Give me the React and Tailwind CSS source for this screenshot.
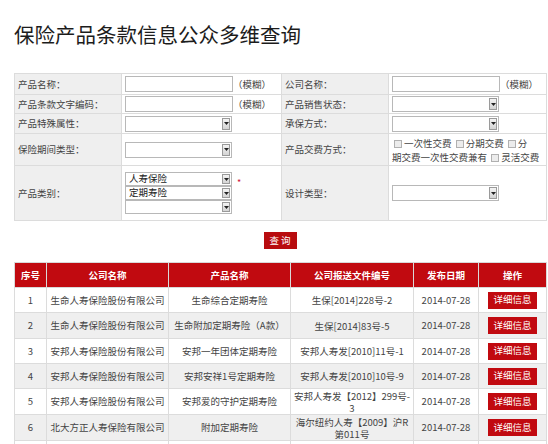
import React from "react";

const rows = [
  { no: 1, company: "生命人寿保险股份有限公司", product: "生命综合定期寿险", doc: ["生保[2014]228号-2"], h: "h-[25px]" },
  { no: 2, company: "生命人寿保险股份有限公司", product: "生命附加定期寿险（A款）", doc: ["生保[2014]83号-5"], h: "h-[26px]" },
  { no: 3, company: "安邦人寿保险股份有限公司", product: "安邦一年团体定期寿险", doc: ["安邦人寿发[2010]11号-1"], h: "h-[25px]" },
  { no: 4, company: "安邦人寿保险股份有限公司", product: "安邦安祥1号定期寿险", doc: ["安邦人寿发[2010]10号-9"], h: "h-[25px]" },
  { no: 5, company: "安邦人寿保险股份有限公司", product: "安邦爱的守护定期寿险", doc: ["安邦人寿发【2012】299号-", "3"], h: "h-[26px]" },
  { no: 6, company: "北大方正人寿保险有限公司", product: "附加定期寿险", doc: ["海尔纽约人寿【2009】沪R", "第011号"], h: "h-[26px]" },
];

function TextBox() {
  return <div className="w-[108px] h-[16px] border border-[#b8b8b8] bg-white shrink-0" />;
}

function SelectBox({ value = "", tall = "h-[16px]" }) {
  return (
    <div className={`relative w-[107px] ${tall} border border-[#b8b8b8] bg-white flex items-center shrink-0`}>
      <span className="pl-[3px] text-[9.5px] leading-none text-[#222]">{value}</span>
      <span className="absolute right-[1px] top-[1px] bottom-[1px] w-[8px] border border-[#9a9a9a] bg-gradient-to-b from-[#f4f4f4] to-[#d4d4d4] flex items-center justify-center">
        <svg width="5" height="3" viewBox="0 0 5 3">
          <path d="M0 0 L5 0 L2.5 3 Z" fill="#222" />
        </svg>
      </span>
    </div>
  );
}

function Check() {
  return <span className="inline-block w-[8px] h-[8px] border border-[#b0b0b0] bg-[#ececec] ml-[2px] mr-[2px] align-[-1px]" />;
}

const label = "bg-[#efefef] border border-[#dcdcdc] pl-[3px] text-left text-[9.5px] text-[#444] align-middle";
const field = "bg-white border border-[#dcdcdc] pl-[3px] align-middle";
const fuzzy = <span className="text-[9.5px] text-[#444]">（模糊）</span>;

export default function App() {
  return (
    <div className="w-[548px] h-[444px] overflow-hidden bg-white font-['Noto_Sans_CJK_SC','Noto_Sans',sans-serif]">
      <div className="pl-[14px] pt-[19px] leading-[30px] text-[20.5px] text-[#1c1c1c] mb-[24px]">
        保险产品条款信息公众多维查询
      </div>

      <table className="ml-[14px] w-[532px] table-fixed border-collapse">
        <colgroup>
          <col className="w-[107px]" />
          <col className="w-[160px]" />
          <col className="w-[107px]" />
          <col className="w-[158px]" />
        </colgroup>
        <tbody>
          <tr className="h-[21px]">
            <td className={label}>产品名称：</td>
            <td className={field}>
              <div className="flex items-center"><TextBox />{fuzzy}</div>
            </td>
            <td className={label}>公司名称：</td>
            <td className={field}>
              <div className="flex items-center"><TextBox />{fuzzy}</div>
            </td>
          </tr>
          <tr className="h-[19px]">
            <td className={label}>产品条款文字编码：</td>
            <td className={field}>
              <div className="flex items-center"><TextBox />{fuzzy}</div>
            </td>
            <td className={label}>产品销售状态：</td>
            <td className={field}><SelectBox /></td>
          </tr>
          <tr className="h-[20px]">
            <td className={label}>产品特殊属性：</td>
            <td className={field}><SelectBox /></td>
            <td className={label}>承保方式：</td>
            <td className={field}><SelectBox /></td>
          </tr>
          <tr className="h-[32px]">
            <td className={label}>保险期间类型：</td>
            <td className={field}><SelectBox /></td>
            <td className={label}>产品交费方式：</td>
            <td className={field}>
              <div className="text-[9.5px] leading-[14px] text-[#444] whitespace-nowrap">
                <div><Check />一次性交费 <Check />分期交费 <Check />分</div>
                <div>期交费一次性交费兼有 <Check />灵活交费</div>
              </div>
            </td>
          </tr>
          <tr className="h-[55px]">
            <td className={label}>产品类别：</td>
            <td className={field}>
              <div className="flex items-start">
                <div className="flex flex-col">
                  <SelectBox value="人寿保险" tall="h-[14px]" />
                  <SelectBox value="定期寿险" tall="h-[14px]" />
                  <SelectBox tall="h-[14px]" />
                </div>
                <span className="ml-[5px] mt-[6px] text-[9px] leading-none text-[#d0103a]">*</span>
              </div>
            </td>
            <td className={label}>设计类型：</td>
            <td className={field}><SelectBox /></td>
          </tr>
        </tbody>
      </table>

      <div className="flex justify-center ml-[14px] w-[532px] mt-[11px] mb-[13px]">
        <button className="w-[33px] h-[17px] bg-[#b80c0f] text-white text-[9.5px] leading-none flex items-center justify-center">
          查 询
        </button>
      </div>

      <table className="ml-[14px] w-[532px] table-fixed border-collapse text-[9.5px]">
        <colgroup>
          <col className="w-[32px]" />
          <col className="w-[122px]" />
          <col className="w-[122px]" />
          <col className="w-[123px]" />
          <col className="w-[65px]" />
          <col className="w-[68px]" />
        </colgroup>
        <thead>
          <tr className="h-[25px] bg-[#c10a10] text-white font-bold">
            <th className="border border-[#d9d9d9]">序号</th>
            <th className="border border-[#d9d9d9]">公司名称</th>
            <th className="border border-[#d9d9d9]">产品名称</th>
            <th className="border border-[#d9d9d9]">公司报送文件编号</th>
            <th className="border border-[#d9d9d9]">发布日期</th>
            <th className="border border-[#d9d9d9]">操作</th>
          </tr>
        </thead>
        <tbody className="text-[#444]">
          {rows.map((r) => (
            <tr key={r.no} className={`${r.h} ${r.no % 2 === 0 ? "bg-[#efefef]" : "bg-white"}`}>
              <td className="border border-[#dcdcdc] text-center">{r.no}</td>
              <td className="border border-[#dcdcdc] text-center whitespace-nowrap">{r.company}</td>
              <td className="border border-[#dcdcdc] text-center whitespace-nowrap">{r.product}</td>
              <td className="border border-[#dcdcdc] text-center whitespace-nowrap">
                {r.doc.map((d, i) => (
                  <div key={i} className="leading-[12px]">{d}</div>
                ))}
              </td>
              <td className="border border-[#dcdcdc] text-center">2014-07-28</td>
              <td className="border border-[#dcdcdc] text-center">
                <div className="flex justify-center">
                  <button className="w-[49px] h-[17px] bg-[#c10a10] text-white text-[9.5px] leading-none">
                    详细信息
                  </button>
                </div>
              </td>
            </tr>
          ))}
          <tr className="h-[26px] bg-white">
            <td className="border border-[#dcdcdc]" />
            <td className="border border-[#dcdcdc]" />
            <td className="border border-[#dcdcdc]" />
            <td className="border border-[#dcdcdc]" />
            <td className="border border-[#dcdcdc]" />
            <td className="border border-[#dcdcdc]" />
          </tr>
        </tbody>
      </table>
    </div>
  );
}
